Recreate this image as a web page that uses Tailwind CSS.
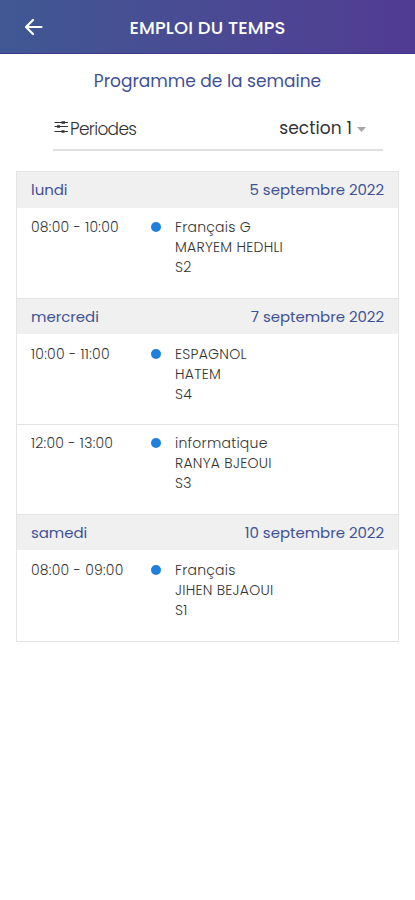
<!DOCTYPE html>
<html lang="fr">
<head>
<meta charset="utf-8">
<title>Emploi du temps</title>
<script src="https://cdn.jsdelivr.net/npm/@tailwindcss/browser@4"></script>
</head>
<body class="bg-white font-['Poppins','Inter',sans-serif] h-[900px] w-[415px] overflow-hidden text-[#333]">
<header class="h-[54px] bg-linear-to-r from-[#3f5893] to-[#513b93] border-b border-[#40398a] grid grid-cols-[67px_1fr_67px] items-center text-white">
  <svg class="ml-[24px] mt-px" width="20" height="20" viewBox="0 0 20 20" fill="none" stroke="currentColor" stroke-width="2.200" stroke-linecap="round" stroke-linejoin="round"><path d="M17.500 10H2.500M9 3L2 10L9 17"/></svg>
  <h1 class="text-center text-[18px] font-medium tracking-[0.1px] whitespace-nowrap pt-px">EMPLOI DU TEMPS</h1>
</header>
<h2 class="h-[54px] flex items-center justify-center text-[17px] text-[#3f5296] whitespace-nowrap pt-[2px]">Programme de la semaine</h2>
<div class="ml-[53px] w-[330px] h-[43px] border-b-2 border-[#e0e0e0] flex justify-between items-center text-[17px] pt-px">
  <div class="flex items-center">
    <svg class="w-[17px] h-[14px] -mt-[4px]" viewBox="0 0 17 14" fill="none" stroke="#333" stroke-width="1"><path d="M1.500 2.500H15M1.500 6.500H15M1.500 11.500H15"/><path stroke-width="2.600" d="M8.500 2.500H12M4 6.500H7M8.500 11.500H11.500"/></svg>
    <span class="text-[17px] font-light tracking-[-0.7px] pt-[2px]">Periodes</span>
  </div>
  <div class="flex items-center pr-[17px] gap-[5px]"><span class="tracking-[0.1px]">section 1</span>
    <svg width="9" height="5" viewBox="0 0 9 5" fill="#a6a6a6"><path d="M0 0H9L4.500 5Z"/></svg>
  </div>
</div>
<main class="mx-[16px] mt-[20px] border border-[#e4e4e4] w-[383px] text-[14px] leading-[20px] font-light tracking-[0.25px]">
  <section>
    <div class="h-[36px] bg-[#f0f0f0] px-[14px] flex items-center justify-between text-[15px] tracking-[-0.05px] font-normal text-[#3f5296]"><span>lundi</span><span>5 septembre 2022</span></div>
    <div class="h-[90px] pt-[9px] pl-[14px] grid grid-cols-[120px_24px_1fr]"><span>08:00 - 10:00</span><i class="size-[10px] rounded-full bg-[#1e80dc] mt-[5px]"></i>
      <div><p>Français G</p><p>MARYEM HEDHLI</p><p>S2</p></div></div>
  </section>
  <section>
    <div class="h-[36px] border-t border-[#e4e4e4] bg-[#f0f0f0] px-[14px] flex items-center justify-between text-[15px] tracking-[-0.05px] font-normal text-[#3f5296]"><span>mercredi</span><span>7 septembre 2022</span></div>
    <div class="h-[90px] pt-[10px] pl-[14px] grid grid-cols-[120px_24px_1fr]"><span>10:00 - 11:00</span><i class="size-[10px] rounded-full bg-[#1e80dc] mt-[5px]"></i>
      <div><p>ESPAGNOL</p><p>HATEM</p><p>S4</p></div></div>
    <div class="h-[90px] border-t border-[#e4e4e4] pt-[8px] pl-[14px] grid grid-cols-[120px_24px_1fr]"><span>12:00 - 13:00</span><i class="size-[10px] rounded-full bg-[#1e80dc] mt-[5px]"></i>
      <div><p>informatique</p><p>RANYA BJEOUI</p><p>S3</p></div></div>
  </section>
  <section>
    <div class="h-[36px] border-t border-[#e4e4e4] bg-[#f0f0f0] px-[14px] flex items-center justify-between text-[15px] tracking-[-0.05px] font-normal text-[#3f5296]"><span>samedi</span><span>10 septembre 2022</span></div>
    <div class="h-[91px] pt-[10px] pl-[14px] grid grid-cols-[120px_24px_1fr]"><span>08:00 - 09:00</span><i class="size-[10px] rounded-full bg-[#1e80dc] mt-[5px]"></i>
      <div><p>Français</p><p>JIHEN BEJAOUI</p><p>S1</p></div></div>
  </section>
</main>
</body>
</html>
